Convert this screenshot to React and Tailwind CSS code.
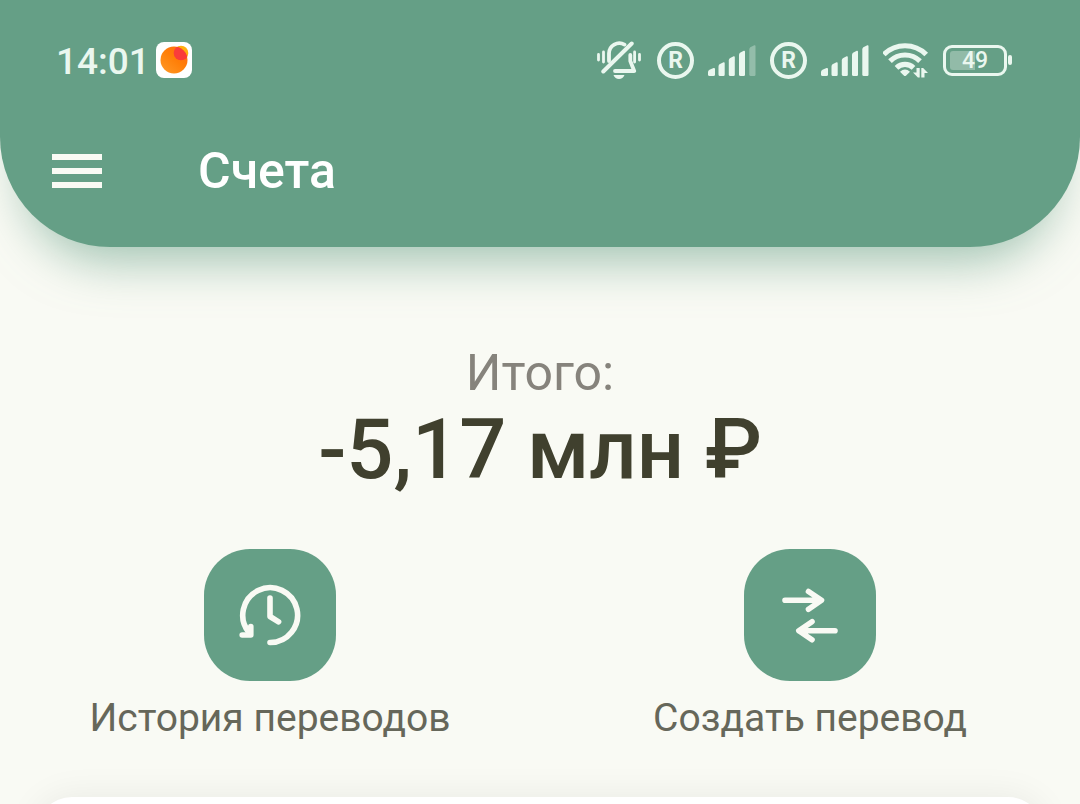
function AppBadge() {
  return (
    <svg viewBox="0 0 36 36" className="size-9" aria-hidden="true">
      <defs>
        <linearGradient id="orb" x1="0.9" y1="0.1" x2="0.2" y2="0.9">
          <stop offset="0" stopColor="#ff6a10" />
          <stop offset="0.5" stopColor="#ff7f08" />
          <stop offset="1" stopColor="#ff9320" />
        </linearGradient>
        <clipPath id="orbClip">
          <circle cx="18" cy="18" r="13.5" />
        </clipPath>
      </defs>
      <rect width="36" height="36" rx="8" fill="#fff" />
      <circle cx="25" cy="11" r="7.3" fill="#ffae0d" />
      <circle cx="18" cy="18" r="13.5" fill="url(#orb)" />
      <circle cx="25" cy="11" r="7.3" fill="#fa3c3a" clipPath="url(#orbClip)" />
    </svg>
  );
}

function MutedBell() {
  return (
    <svg viewBox="0 0 46 38" className="h-[38px] w-[46px]" fill="none" stroke="currentColor" strokeLinecap="round" strokeLinejoin="round" aria-hidden="true">
      <path strokeWidth="3.800" d="M12 20V12.500A10.300 10.300 0 0 1 27.500 3.600M33.300 14V20l3.900 10H18" />
      <path strokeWidth="4" d="M34.700 2.500 6.300 30.500" />
      <path strokeWidth="2.800" d="M1.500 13.500v5.500M6.500 11v10M37.600 11v10M42.500 13.500v5.500" />
      <path fill="currentColor" stroke="none" d="M16.500 34h11c-1 2.500-3 4-5.500 4s-4.500-1.500-5.500-4z" />
    </svg>
  );
}

function Roaming() {
  return (
    <span className="flex size-[37px] items-center justify-center rounded-full border-4 border-current text-[23px] leading-none font-bold">
      R
    </span>
  );
}

function Signal({ weak = false }) {
  return (
    <svg viewBox="0 0 48 31" className="h-[31px] w-12" fill="currentColor" aria-hidden="true">
      <path d="M0 27q0-1.500 1.500-2.200L5.500 23q1.500-.4 1.500 1V29.500Q7 31 5.500 31h-4Q0 31 0 29.500z" />
      <path d="M10.500 21.500q0-1.500 1-2.200l4-2q1.200-.4 1.200 1V29.500q0 1.500-1.200 1.500h-3.500q-1.500 0-1.500-1.500z" />
      <path d="M20.800 15.500q0-1.500 1-2.200l3.800-2q1.200-.4 1.200 1V29.500q0 1.500-1.200 1.500h-3.300q-1.500 0-1.500-1.500z" />
      <path d="M31 10q0-1.500 1-2.200l3.800-2q1.200-.4 1.200 1V29.500q0 1.500-1.200 1.500h-3.300q-1.500 0-1.500-1.500z" />
      <path opacity={weak ? 0.35 : 1} d="M41.300 4.500q0-1.500 1-2.200l4-2q1.200-.4 1.200 1V29.500q0 1.500-1.200 1.500h-3.500q-1.500 0-1.500-1.500z" />
    </svg>
  );
}

function Wifi() {
  return (
    <svg viewBox="1 0 46 36" className="h-9 w-[46px]" aria-hidden="true">
      <g fill="none" stroke="currentColor" strokeWidth="5.200">
        <path d="M1.800 12.500a30 30 0 0 1 42.400 0" />
        <path d="M8 19.200a21.300 21.300 0 0 1 30 0" />
        <path d="M14.500 25.800a12.200 12.200 0 0 1 17 0" />
      </g>
      <path fill="currentColor" d="M18 29.800q5-4.600 10 0L24.200 33.500q-1.200 1-2.400 0z" />
      <path fill="currentColor" stroke="#659f86" strokeWidth="1" paintOrder="stroke" d="M34.500 26h3.200v9.500h-1.800l-4.900-5h3.500zM39.300 35.500V26h1.800l4.900 5h-3.500v4.500z" />
    </svg>
  );
}

function Battery({ level }) {
  return (
    <span className="flex items-center gap-px">
      <span className="relative flex h-[31px] w-16 items-center justify-center rounded-[9px] border-[3px] border-current">
        <span
          className="absolute inset-y-[3px] left-1 rounded-l-[3px] bg-[#92bba8]"
          style={{ width: `calc((100% - 8px) * ${level / 100})` }}
        />
        <span className="relative text-[23px] leading-none font-medium">{level}</span>
      </span>
      <span className="h-2.5 w-1 rounded-full bg-current" />
    </span>
  );
}

function HistoryIcon() {
  return (
    <svg viewBox="0 0 132 132" className="size-full" fill="none" stroke="currentColor" strokeWidth="5.600" strokeLinecap="round" strokeLinejoin="round" aria-hidden="true">
      <path d="M66 93.500A27.400 27.400 0 1 0 45 83.500" />
      <path d="M46.800 77.500V86H38.200" />
      <path d="M66 49v18.500l8.600 5.300" />
    </svg>
  );
}

function TransferIcon() {
  return (
    <svg viewBox="0 0 132 132" className="size-full" fill="none" stroke="currentColor" strokeWidth="5.600" strokeLinecap="round" strokeLinejoin="round" aria-hidden="true">
      <path d="M41 51.300H77M64.500 42.500 77.500 51.300 64.500 60.300" />
      <path d="M91 81.700H55M68 72.700 54.800 81.700 68 90.700" />
    </svg>
  );
}

function Action({ label, children }) {
  return (
    <button type="button" className="flex flex-col items-center gap-3 text-[39px] leading-[50px] text-[#66675a]">
      <span className="size-[132px] rounded-[46px] bg-[#659f86] text-[#f9faf4]">{children}</span>
      {label}
    </button>
  );
}

export default function App() {
  return (
    <div className="flex h-screen flex-col overflow-x-hidden overflow-y-auto bg-[#f9faf4] font-[Roboto,sans-serif] [scrollbar-width:none]">
      <header className="shrink-0 rounded-b-[110px] bg-[#659f86] pt-10 pb-10 shadow-[0_38px_48px_-24px_rgba(101,159,134,0.6)]">
        <div className="flex h-10 items-center justify-between pr-[68px] pl-14 text-[#eaf7ef]">
          <div className="flex items-center gap-1.5">
            <time className="pt-1 text-[37px] leading-10 font-medium">14:01</time>
            <AppBadge />
          </div>
          <div className="flex items-center gap-3.5">
            <MutedBell />
            <Roaming />
            <Signal weak />
            <Roaming />
            <Signal />
            <Wifi />
            <Battery level={49} />
          </div>
        </div>
        <div className="mt-[54px] flex h-[73px] items-center gap-24 px-[52px]">
          <button type="button" aria-label="Меню" className="flex w-[50px] flex-col gap-2 text-[#f9faf4]">
            <span className="h-1.5 bg-current" />
            <span className="h-1.5 bg-current" />
            <span className="h-1.5 bg-current" />
          </button>
          <h1 className="text-[50px] leading-[60px] font-medium text-white">Счета</h1>
        </div>
      </header>

      <main className="flex shrink-0 grow flex-col pt-[96px]">
        <section className="text-center">
          <p className="text-[50px] leading-[60px] text-[#86837c]">Итого:</p>
          <p className="text-[83px] leading-[94px] font-medium text-[#40402e]">-5,17 млн ₽</p>
        </section>
        <nav className="mt-[52px] grid grid-cols-2 justify-items-center">
          <Action label="История переводов">
            <HistoryIcon />
          </Action>
          <Action label="Создать перевод">
            <TransferIcon />
          </Action>
        </nav>
        <section className="mx-9 mt-[54px] min-h-40 grow rounded-t-[36px] bg-white shadow-[0_0_36px_rgba(0,0,0,0.07)]" />
      </main>
    </div>
  );
}
